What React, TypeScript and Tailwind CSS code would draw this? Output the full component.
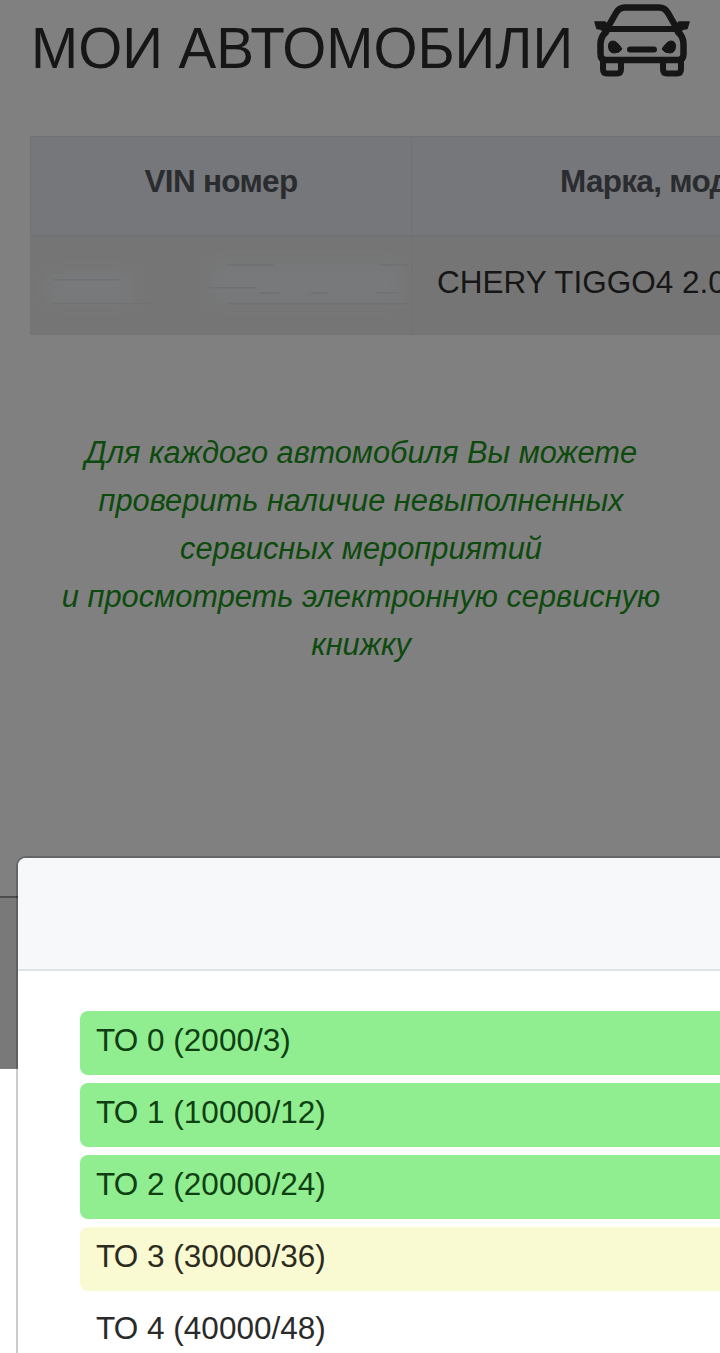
const font = { fontFamily: '"Liberation Sans", Arial, sans-serif' };

function CarIcon() {
  return (
    <svg width="130" height="90" viewBox="0 0 130 90" className="absolute left-[570px] top-0" fill="none" stroke="#161616" strokeLinecap="round" strokeLinejoin="round">
      <path d="M38 27 L46 13 Q49 7.5 55 7.5 L89 7.5 Q95 7.5 98 13 L106 27" strokeWidth="6.5" />
      <path d="M34 29 L110 29" strokeWidth="6" />
      <path d="M36 32 Q30.5 37 30.5 44 L30.5 54 Q30.5 60 36 60 L108 60 Q113.5 60 113.5 54 L113.5 44 Q113.5 37 108 32" strokeWidth="6.5" />
      <path d="M25 22 L35 22 L37 24 L33 29.5 L27 28.5 Z" fill="#161616" strokeWidth="1.5" />
      <path d="M119 22 L109 22 L107 24 L111 29.5 L117 28.5 Z" fill="#161616" strokeWidth="1.5" />
      <path d="M38.5 46 Q38.5 41 43 41 Q47 41 52 49 Q50 53 44 53 Q38.5 53 38.5 46 Z" fill="#161616" strokeWidth="1" />
      <path d="M105.5 46 Q105.5 41 101 41 Q97 41 92 49 Q94 53 100 53 Q105.5 53 105.5 46 Z" fill="#161616" strokeWidth="1" />
      <path d="M60 49.5 L84 49.5" strokeWidth="6" />
      <path d="M33 62 L33 69 Q33 73.5 37 73.5 L47 73.5 Q51 73.5 51 69 L51 62" strokeWidth="6" />
      <path d="M93 62 L93 69 Q93 73.5 97 73.5 L107 73.5 Q111 73.5 111 69 L111 62" strokeWidth="6" />
    </svg>
  );
}

function BlurredVin() {
  return (
    <svg width="380" height="97" viewBox="0 0 380 97" className="absolute left-0 top-0">
      <defs>
        <filter id="b" x="-10%" y="-200%" width="120%" height="500%"><feGaussianBlur stdDeviation="0.7" /></filter>
        <filter id="c" x="-20%" y="-50%" width="140%" height="200%"><feGaussianBlur stdDeviation="7" /></filter>
      </defs>
      <rect x="17" y="36" width="85" height="30" fill="#78797a" filter="url(#c)" />
      <rect x="180" y="26" width="190" height="40" fill="#77797a" filter="url(#c)" />
      <g fill="#6f7174" filter="url(#b)">
        <rect x="22" y="42" width="66" height="1.5" />
        <rect x="20" y="66" width="100" height="1" />
        <rect x="195" y="27" width="48" height="1.5" />
        <rect x="178" y="50" width="48" height="1.5" />
        <rect x="228" y="55" width="20" height="2" />
        <rect x="280" y="55" width="16" height="2" />
        <rect x="345" y="55" width="22" height="1.5" />
        <rect x="198" y="66" width="180" height="1.5" />
        <rect x="350" y="27" width="28" height="1.5" />
      </g>
    </svg>
  );
}

const items = [
  { label: "ТО 0 (2000/3)", bg: "bg-[#90ee90]", text: "text-[#0f3f12]" },
  { label: "ТО 1 (10000/12)", bg: "bg-[#90ee90]", text: "text-[#0f3f12]" },
  { label: "ТО 2 (20000/24)", bg: "bg-[#90ee90]", text: "text-[#0f3f12]" },
  { label: "ТО 3 (30000/36)", bg: "bg-[#fafad2]", text: "text-[#2b2b20]" },
  { label: "ТО 4 (40000/48)", bg: "bg-white", text: "text-[#2a2a2a]" },
];

export default function App() {
  return (
    <div style={font} className="relative w-[720px] h-[1353px] overflow-hidden bg-white">
      <div className="h-[1069px] bg-[#808080] overflow-hidden">
        <div className="relative">
          <h1 className="pl-[31px] pt-[11px] h-[136px] text-[56.6px] leading-[76px] font-normal text-[#161616] whitespace-nowrap">МОИ АВТОМОБИЛИ</h1>
          <CarIcon />
        </div>
        <div className="ml-[30px] w-[900px] border border-[#717376] text-[#2a2c30]">
          <div className="flex h-[100px] bg-[#75777a] border-b-2 border-[#6f7174] text-[31.5px] font-bold tracking-[-0.7px]">
            <div className="w-[381px] flex items-center justify-center border-r border-[#6f7174] pb-[9px]">VIN номер</div>
            <div className="flex-1 pl-[148px] flex items-center pb-[9px] whitespace-nowrap">Марка, модель</div>
          </div>
          <div className="flex h-[97px] bg-[#757575]">
            <div className="relative w-[381px] border-r border-[#6f7174]"><BlurredVin /></div>
            <div className="flex-1 pl-[25px] flex items-center pb-[5px] text-[31.5px] text-[#161616] whitespace-nowrap">CHERY TIGGO4 2.0</div>
          </div>
        </div>
        <div className="mt-[94px] pl-[2px] text-center italic text-[30.8px] leading-[48px] text-[#0d4a0d]">
          <p>Для каждого автомобиля Вы можете</p>
          <p>проверить наличие невыполненных</p>
          <p>сервисных мероприятий</p>
          <p>и просмотреть электронную сервисную</p>
          <p>книжку</p>
        </div>
        <div className="mt-[227px] h-[172px] border-t-2 border-[#4d4d4d] bg-[#797979]" />
      </div>

      <div className="absolute left-[16px] top-[856px] w-[800px] h-[600px] bg-white bg-clip-padding rounded-tl-[10px] border-2 border-black/20">
        <div className="h-[113px] rounded-tl-[8px] bg-[#f7f8fa] border-b-2 border-[#e0e3e6]" />
        <div className="pl-[62px] pt-[40px] flex flex-col gap-[8px]">
          {items.map((it) => (
            <div key={it.label} className={`h-[64px] rounded-[8px] pl-[16px] pt-[11px] text-[31.5px] leading-[36px] ${it.bg} ${it.text}`}>{it.label}</div>
          ))}
        </div>
      </div>
    </div>
  );
}
